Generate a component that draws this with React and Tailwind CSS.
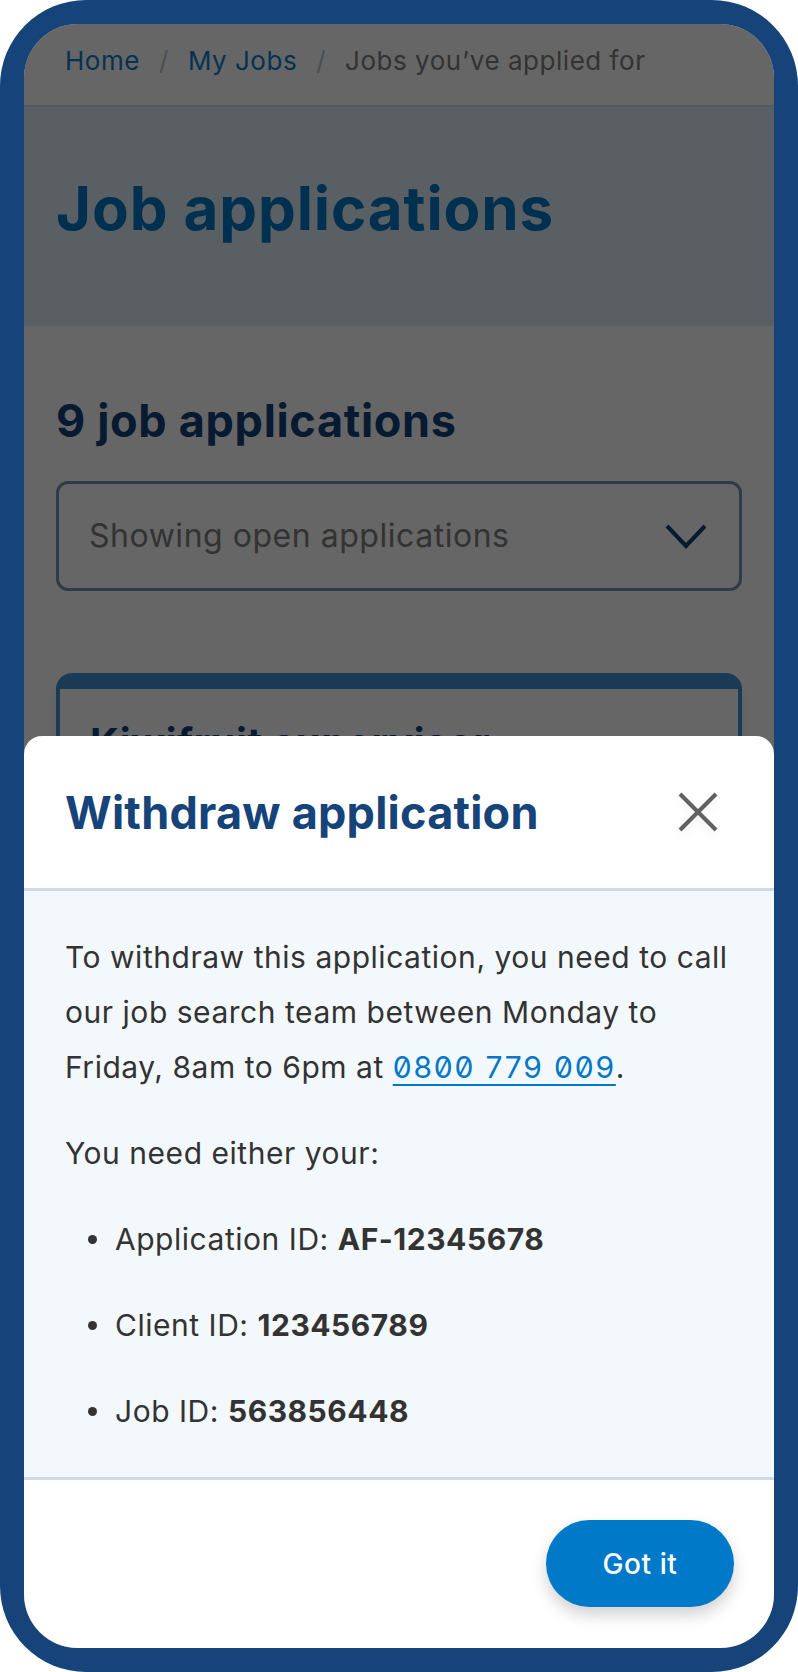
function Breadcrumb() {
  return (
    <nav className="flex items-center h-[83px] pl-[41px] pb-[8px] border-b-2 border-[#d5dde6] text-[26px] shrink-0">
      <a className="text-[#0b7fcc]">Home</a>
      <span className="mx-[19px] text-[#b9c6d6]">/</span>
      <a className="text-[#0b7fcc]">My Jobs</a>
      <span className="mx-[19px] text-[#b9c6d6]">/</span>
      <span className="text-[#808080]">Jobs you’ve applied for</span>
    </nav>
  );
}

function PageBehind() {
  return (
    <div className="flex flex-col">
      <Breadcrumb />

      {/* Hero */}
      <div className="h-[219px] bg-[#e1eef8] flex items-center px-[32px] pb-[18px] shrink-0">
        <h1 className="text-[60px] font-bold text-[#0079c8] leading-none tracking-[0.015em]">Job applications</h1>
      </div>

      <div className="px-[32px] pt-[72px]">
        <h2 className="text-[45px] font-bold text-[#15437a] leading-none tracking-[0.015em]">9 job applications</h2>

        {/* Filter */}
        <div className="mt-[38px] h-[110px] border-[3px] border-[#7494b8] rounded-[12px] flex items-center justify-between pl-[30px] pr-[32px]">
          <span className="text-[32px] text-[#808080]">Showing open applications</span>
          <svg width="42" height="25" viewBox="0 0 42 25" fill="none" stroke="#15437a" strokeWidth="4">
            <polyline points="2,2 21,22 40,2" />
          </svg>
        </div>

        {/* Card */}
        <div className="mt-[82px] rounded-t-[16px] border-x-4 border-t-[16px] border-[#4491d7] shadow-lg h-[300px] px-[30px] pt-[34px]">
          <h3 className="text-[40px] font-bold text-[#15437a] leading-none tracking-[0.015em]">Kiwifruit supervisor</h3>
        </div>
      </div>
    </div>
  );
}

function WithdrawModal() {
  return (
    <div className="absolute inset-x-0 bottom-0 h-[912px] bg-white rounded-t-[18px] flex flex-col">
      <div className="h-[152px] flex items-center justify-between pl-[41px] pr-[56px] shrink-0">
        <h2 className="text-[45px] font-bold text-[#15437a] leading-none tracking-[0.005em]">Withdraw application</h2>
        <button className="text-[#616161] [filter:drop-shadow(0_6px_4px_rgba(0,0,0,0.06))]">
          <svg width="40" height="40" viewBox="0 0 40 40" fill="none" stroke="currentColor" strokeWidth="4">
            <line x1="2" y1="2" x2="38" y2="38" />
            <line x1="38" y1="2" x2="2" y2="38" />
          </svg>
        </button>
      </div>

      <div className="flex-1 bg-[#f3f8fc] border-y-[3px] border-[#d0d9e4] pl-[41px] pr-[24px] pt-[39px] text-[30px] leading-[55px] text-[#333333]">
        <p>
          To withdraw this application, you need to call our job search team between Monday to
          Friday, 8am to 6pm at{' '}
          <a className="text-[#0077c8] underline underline-offset-[6px] decoration-2 slashed-zero tracking-[0.06em]">
            0800 779 009
          </a>
          .
        </p>
        <p className="mt-[31px]">You need either your:</p>
        <ul className="mt-[31px] flex flex-col gap-[31px]">
          <li className="flex items-center">
            <span className="w-[9px] h-[9px] rounded-full bg-[#333333] ml-[23px] mr-[18px]" />
            <span>Application ID: <b>AF-12345678</b></span>
          </li>
          <li className="flex items-center">
            <span className="w-[9px] h-[9px] rounded-full bg-[#333333] ml-[23px] mr-[18px]" />
            <span>Client ID: <b>123456789</b></span>
          </li>
          <li className="flex items-center">
            <span className="w-[9px] h-[9px] rounded-full bg-[#333333] ml-[23px] mr-[18px]" />
            <span>Job ID: <b>563856448</b></span>
          </li>
        </ul>
      </div>

      <div className="h-[168px] flex justify-end items-start pt-[40px] pr-[40px] shrink-0">
        <button className="w-[188px] h-[87px] rounded-full bg-[#0079c9] text-white text-[28px] font-medium tracking-[0.02em] shadow-[0_8px_16px_rgba(0,0,0,0.18)]">
          Got it
        </button>
      </div>
    </div>
  );
}

export default function App() {
  return (
    <div className="w-[798px] h-[1672px] bg-white font-['Inter',sans-serif] tracking-[0.033em]">
      <div className="w-full h-full rounded-[86px] bg-[#15437a] p-[24px]">
        <div className="relative w-full h-full rounded-[54px] overflow-hidden bg-white">
          <PageBehind />
          {/* dim overlay */}
          <div className="absolute inset-0 bg-black/60" />
          <WithdrawModal />
        </div>
      </div>
    </div>
  );
}
